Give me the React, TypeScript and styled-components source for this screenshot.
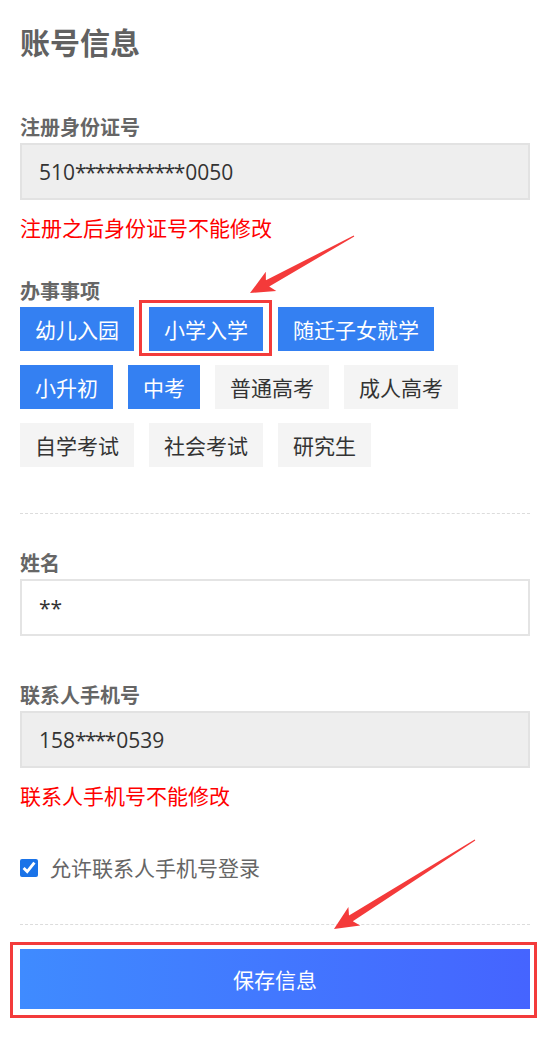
import React from "react";
import styled, { createGlobalStyle } from "styled-components";

const GlobalStyle = createGlobalStyle`
  html, body {
    margin: 0;
    padding: 0;
    background: #fff;
  }
  body {
    font-family: "Open Sans", "Noto Sans CJK SC", sans-serif;
  }
`;

const TAGS = [
  { name: "幼儿入园", active: true },
  { name: "小学入学", active: true, marked: true },
  { name: "随迁子女就学", active: true },
  { name: "小升初", active: true },
  { name: "中考", active: true },
  { name: "普通高考" },
  { name: "成人高考" },
  { name: "自学考试" },
  { name: "社会考试" },
  { name: "研究生" },
];

// arrow polygon from tail to tip, in page coordinates
const arrowPoints = (tx: number, ty: number, px: number, py: number) => {
  const dx = px - tx;
  const dy = py - ty;
  const len = Math.hypot(dx, dy);
  const ux = dx / len;
  const uy = dy / len;
  const head = 20;
  const back = 4;
  const local: [number, number][] = [
    [0, -0.6],
    [len - head, -3.5],
    [len - head - back, -11],
    [len, 0],
    [len - head - back, 11],
    [len - head, 3.5],
    [0, 0.6],
  ];
  return local
    .map(([a, b]) => `${(tx + ux * a - uy * b).toFixed(1)},${(ty + uy * a + ux * b).toFixed(1)}`)
    .join(" ");
};

// masked numbers: the stars are narrower than the digits
const Masked = ({ head, stars, tail }: { head: string; stars: number; tail: string }) => (
  <>
    {head}
    <Stars>{"*".repeat(stars)}</Stars>
    {tail}
  </>
);

const App = () => {
  return (
    <Page>
      <GlobalStyle />
      <Title>账号信息</Title>

      <Field $gap={52}>
        <Label>注册身份证号</Label>
        <Input $readonly>
          <Masked head="510" stars={11} tail="0050" />
        </Input>
        <Hint>注册之后身份证号不能修改</Hint>
      </Field>

      <Field $gap={38}>
        <Label>办事事项</Label>
        <TagList>
          {TAGS.map((t) => (
            <Tag key={t.name} $active={t.active} $marked={t.marked}>
              {t.name}
            </Tag>
          ))}
        </TagList>
      </Field>

      <Divider $gap={46} />

      <Field $gap={38}>
        <Label>姓名</Label>
        <Input>**</Input>
      </Field>

      <Field $gap={48}>
        <Label>联系人手机号</Label>
        <Input $readonly>
          <Masked head="158" stars={4} tail="0539" />
        </Input>
        <Hint>联系人手机号不能修改</Hint>
      </Field>

      <CheckRow>
        <CheckBox type="checkbox" defaultChecked />
        <span>允许联系人手机号登录</span>
      </CheckRow>

      <Divider $gap={42} />

      <SaveButton>保存信息</SaveButton>

      <Marks viewBox="0 0 549 1040">
        <polygon points={arrowPoints(354, 236, 250, 293)} />
        <polygon points={arrowPoints(475, 840, 334, 929)} />
      </Marks>
    </Page>
  );
};

export default App;

const Page = styled.div`
  position: relative;
  display: flex;
  flex-direction: column;
  width: 549px;
  min-height: 1040px;
  box-sizing: border-box;
  padding: 22px 19px 0 20px;
`;

const Title = styled.h1`
  margin: 0;
  font-size: 30px;
  line-height: 42px;
  font-weight: 700;
  color: #616161;
`;

const Field = styled.div<{ $gap: number }>`
  display: flex;
  flex-direction: column;
  margin-top: ${(p) => p.$gap}px;
`;

const Label = styled.div`
  font-size: 20px;
  line-height: 24px;
  font-weight: 700;
  color: #666;
  margin-bottom: 3px;
`;

const Input = styled.div<{ $readonly?: boolean }>`
  display: flex;
  align-items: center;
  height: 57px;
  box-sizing: border-box;
  padding-left: 17px;
  border: 2px solid ${(p) => (p.$readonly ? "#e2e2e2" : "#e4e4e4")};
  background: ${(p) => (p.$readonly ? "#eeeeee" : "#fff")};
  font-size: 21px;
  color: #333;
`;

const Stars = styled.span`
  letter-spacing: -1.7px;
  margin-right: 1.7px;
`;

const Hint = styled.div`
  margin-top: 14px;
  font-size: 21px;
  line-height: 28px;
  color: #ff0000;
`;

const TagList = styled.div`
  display: flex;
  flex-wrap: wrap;
  gap: 14px 15px;
`;

const Tag = styled.div<{ $active?: boolean; $marked?: boolean }>`
  position: relative;
  display: flex;
  align-items: center;
  justify-content: center;
  height: 44px;
  padding: 0 15px;
  font-size: 21px;
  background: ${(p) => (p.$active ? "#3480f2" : "#f4f4f4")};
  color: ${(p) => (p.$active ? "#fff" : "#333")};

  ${(p) =>
    p.$marked &&
    `
    &::after {
      content: "";
      position: absolute;
      left: -10px;
      right: -9px;
      top: -7px;
      bottom: -5px;
      border: 3px solid #f33b3b;
    }
  `}
`;

const Divider = styled.div<{ $gap: number }>`
  margin-top: ${(p) => p.$gap}px;
  border-top: 1px dashed #dcdcdc;
`;

const CheckRow = styled.label`
  display: flex;
  align-items: center;
  gap: 12px;
  margin-top: 44px;
  font-size: 21px;
  line-height: 28px;
  color: #666;
`;

const CheckBox = styled.input`
  width: 18px;
  height: 18px;
  margin: 0;
  accent-color: #1a73e8;
`;

const SaveButton = styled.button`
  position: relative;
  margin-top: 24px;
  height: 60px;
  border: 0;
  border-radius: 0;
  background: linear-gradient(to right, #3f8bff, #4564ff);
  color: #fff;
  font-family: inherit;
  font-size: 21px;

  &::after {
    content: "";
    position: absolute;
    left: -10px;
    right: -7px;
    top: -7px;
    bottom: -9px;
    border: 3px solid #f33b3b;
  }
`;

const Marks = styled.svg`
  position: absolute;
  left: 0;
  top: 0;
  width: 549px;
  height: 1040px;
  pointer-events: none;
  fill: #f43a3a;
`;
